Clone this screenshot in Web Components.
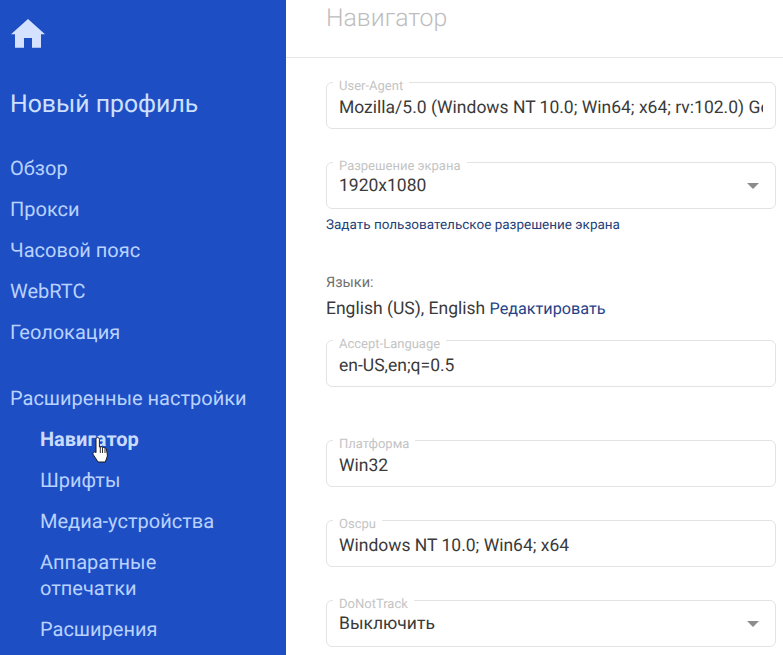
<!DOCTYPE html>
<html lang="ru">
<head>
<meta charset="utf-8">
<title>Навигатор</title>
<style>
  html, body { margin: 0; height: 100%; overflow: hidden; }
  body { font-family: Roboto, "Liberation Sans", sans-serif; background: #fff; text-rendering: geometricPrecision; }
</style>
</head>
<body>
<app-shell>
  <side-nav slot="side" title-text="Новый профиль">
    <nav-link>Обзор</nav-link>
    <nav-link>Прокси</nav-link>
    <nav-link>Часовой пояс</nav-link>
    <nav-link>WebRTC</nav-link>
    <nav-link>Геолокация</nav-link>
    <nav-link class="group">Расширенные настройки</nav-link>
    <nav-link sub active>Навигатор</nav-link>
    <nav-link sub>Шрифты</nav-link>
    <nav-link sub>Медиа-устройства</nav-link>
    <nav-link sub>Аппаратные<br>отпечатки</nav-link>
    <nav-link sub>Расширения</nav-link>
  </side-nav>
  <page-header slot="head">Навигатор</page-header>
  <out-field label="User-Agent" value="Mozilla/5.0 (Windows NT 10.0; Win64; x64; rv:102.0) Gecko/20100101 Firefox/102.0" style="margin-top:24px"></out-field>
  <out-field label="Разрешение экрана" value="1920x1080" select style="margin-top:33px"></out-field>
  <lang-block></lang-block>
  <out-field label="Accept-Language" value="en-US,en;q=0.5" style="margin-top:19px"></out-field>
  <out-field label="Платформа" value="Win32" style="margin-top:53px"></out-field>
  <out-field label="Oscpu" value="Windows NT 10.0; Win64; x64" style="margin-top:33px"></out-field>
  <out-field label="DoNotTrack" value="Выключить" select style="margin-top:33px"></out-field>
</app-shell>

<script>
class AppShell extends HTMLElement {
  constructor() {
    super();
    this.attachShadow({ mode: 'open' });
    this.shadowRoot.innerHTML = `
      <style>
        :host { display: flex; width: 783px; height: 655px; overflow: hidden; }
        .side { flex: 0 0 286px; }
        .main { flex: 1; min-width: 0; display: flex; flex-direction: column; }
        .body { padding: 0 7px 0 40px; }
      </style>
      <div class="side"><slot name="side"></slot></div>
      <div class="main">
        <slot name="head"></slot>
        <div class="body"><slot></slot></div>
      </div>
    `;
  }
}

class SideNav extends HTMLElement {
  constructor() {
    super();
    this.attachShadow({ mode: 'open' });
  }
  connectedCallback() {
    this.shadowRoot.innerHTML = `
      <style>
        :host { display: block; height: 655px; box-sizing: border-box; background: #1d4ec4; color: #c5d9ff; padding: 18px 10px 0; position: relative; overflow: hidden; }
        svg.home { display: block; width: 36px; height: 32px; }
        h1 { margin: 39px 0 26px; font-size: 24.800px; font-weight: 400; line-height: 32px; color: #cfe0ff; }
        .links { display: flex; flex-direction: column; }
        .cursor { position: absolute; left: 91px; top: 436px; width: 20px; height: 28px; }
      </style>
      <svg class="home" viewBox="0 0 36 32"><path d="M18 3 L35 19 H31 V33 H22 V23 H14 V33 H5 V19 H1 Z" transform="translate(0 -2) scale(1 .96)" fill="#d4e2ff"/></svg>
      <h1>${this.getAttribute('title-text')}</h1>
      <div class="links"><slot></slot></div>
      <svg class="cursor" viewBox="0 0 20 28">
        <path d="M6.500 1.500c1.100 0 1.900.9 1.900 2V11l.9-.3c.8-.2 1.600.1 2 .7.7-.3 1.600-.1 2 .6.8-.3 1.700.1 2 .9l1 5.100c.2 1.300 0 2.700-.5 3.900L14.300 26H7l-4.700-7.300c-.6-1-.3-2 .5-2.500.7-.4 1.500-.2 2 .3l.2.2V3.500c0-1.100.6-2 1.500-2z" fill="#fff" stroke="#1a1a1a" stroke-width="1"/>
        <path d="M9.300 11v6M11.500 11.500v5.500M14 12.500v4.500" stroke="#1a1a1a" stroke-width=".9" fill="none"/>
      </svg>
    `;
  }
}

class NavLink extends HTMLElement {
  constructor() {
    super();
    this.attachShadow({ mode: 'open' });
    this.shadowRoot.innerHTML = `
      <style>
        :host { display: block; font-size: 20px; line-height: 26px; padding: 7.500px 0; color: #b9d2ff; }
        :host([sub]) { margin-left: 30px; }
        :host([active]) { font-weight: 700; color: #c9dcff; }
        :host(.group) { margin-top: 25px; }
      </style>
      <slot></slot>
    `;
  }
}

class PageHeader extends HTMLElement {
  constructor() {
    super();
    this.attachShadow({ mode: 'open' });
    this.shadowRoot.innerHTML = `
      <style>
        :host { display: block; height: 57px; border-bottom: 1px solid #e6e6e6; padding-left: 40px; font-size: 24.800px; font-weight: 300; line-height: 38px; color: #bdbdbd; }
      </style>
      <slot></slot>
    `;
  }
}

class OutField extends HTMLElement {
  constructor() {
    super();
    this.attachShadow({ mode: 'open' });
  }
  connectedCallback() {
    const select = this.hasAttribute('select');
    this.shadowRoot.innerHTML = `
      <style>
        :host { display: block; position: relative; height: 47px; box-sizing: border-box; border: 1px solid #e3e3e3; border-radius: 6px; background: #fff; }
        .label { position: absolute; left: 6px; top: -3px; padding: 0 6px; background: #fff; font-size: 13px; line-height: 14px; color: #c4c4c4; white-space: nowrap; }
        .value { position: absolute; left: 12px; right: 12px; top: ${select ? 11 : 13}px; font-size: 17.500px; line-height: 24px; color: #3a3a3a; white-space: nowrap; overflow: hidden; }
        .arrow { position: absolute; right: 16px; top: 20px; width: 0; height: 0; border-left: 6px solid transparent; border-right: 6px solid transparent; border-top: 6px solid #8c8c8c; }
      </style>
      <span class="label">${this.getAttribute('label')}</span>
      <div class="value">${this.getAttribute('value')}</div>
      ${select ? '<span class="arrow"></span>' : ''}
    `;
  }
}

class LangBlock extends HTMLElement {
  constructor() {
    super();
    this.attachShadow({ mode: 'open' });
    this.shadowRoot.innerHTML = `
      <style>
        :host { display: block; }
        .hint { font-size: 13.500px; line-height: 18px; color: #1f3f78; margin-top: 7px; }
        .cap { font-size: 14.500px; line-height: 18px; color: #6f6f6f; margin-top: 40px; }
        .langs { font-size: 17.500px; line-height: 24px; color: #3a3a3a; margin-top: 5px; }
        a { font-size: 16.200px; color: #1f4288; text-decoration: none; }
      </style>
      <div class="hint">Задать пользовательское разрешение экрана</div>
      <div class="cap">Языки:</div>
      <div class="langs">English (US), English <a href="#">Редактировать</a></div>
    `;
  }
}

customElements.define('app-shell', AppShell);
customElements.define('side-nav', SideNav);
customElements.define('nav-link', NavLink);
customElements.define('page-header', PageHeader);
customElements.define('out-field', OutField);
customElements.define('lang-block', LangBlock);
</script>
</body>
</html>
